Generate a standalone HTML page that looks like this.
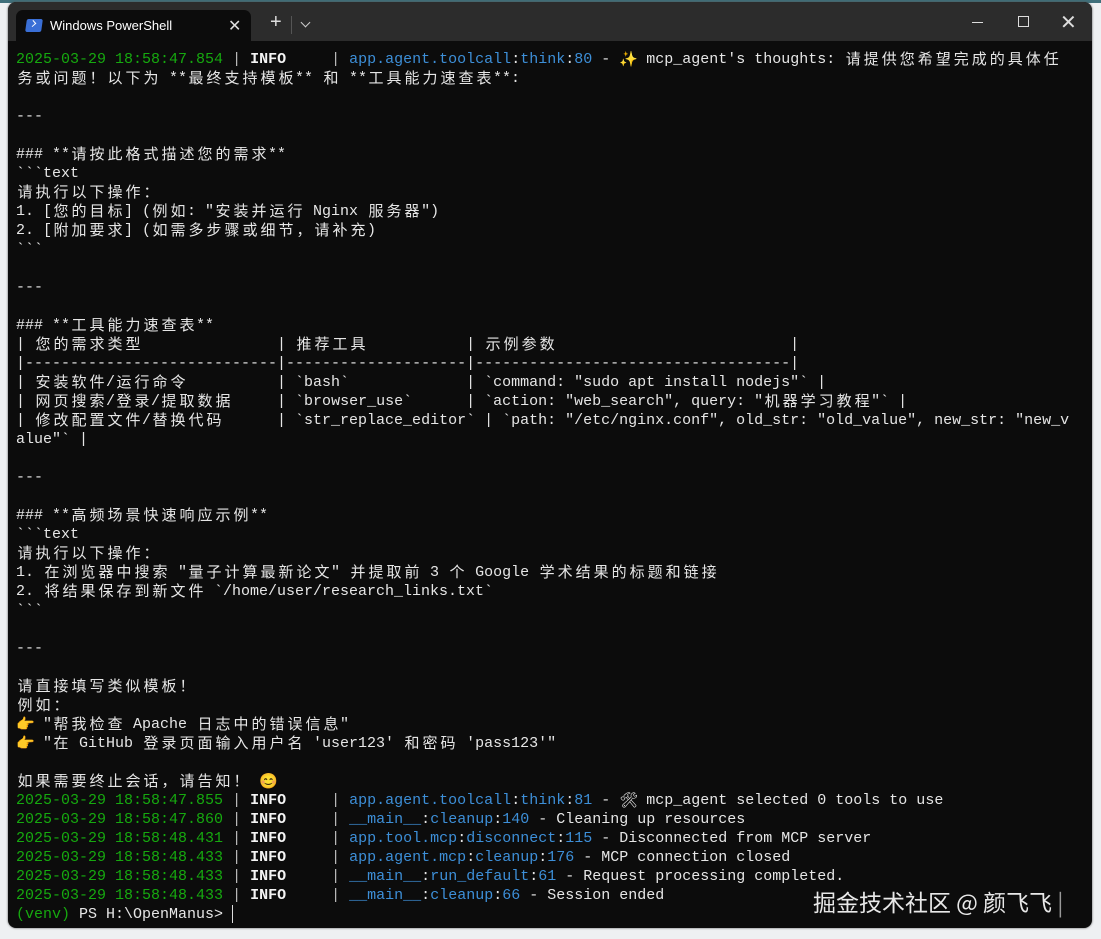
<!DOCTYPE html>
<html><head><meta charset="utf-8">
<style>
html,body{margin:0;padding:0;width:1101px;height:939px;overflow:hidden;background:#eef0f2;}
#top{position:absolute;left:0;top:0;width:1101px;height:3px;background:#3f6f7a;}
#win{position:absolute;left:8px;top:2px;width:1084px;height:926px;background:#0c0c0c;border-radius:8px;overflow:hidden;box-shadow:0 0 2px #555;}
#bar{position:absolute;left:0;top:0;width:1084px;height:39px;background:#2c2c2c;}
#tab{position:absolute;left:8px;top:8px;width:235px;height:32px;background:#0c0c0c;border-radius:7px 7px 0 0;}
#tab .t{position:absolute;left:34px;top:8px;font:13px "Liberation Sans",sans-serif;color:#fff;}
#tab .x{position:absolute;left:212px;top:6px;font:16px "Liberation Sans",sans-serif;color:#ddd;}
.icon{position:absolute;left:10px;top:9px;width:16px;height:13px;background:#3a6fd6;border-radius:2px;transform:skewX(-8deg);}
.icon:after{content:"";position:absolute;left:4px;top:2px;width:4px;height:4px;border-right:1.5px solid #fff;border-bottom:1.5px solid #fff;transform:rotate(-45deg);}
.plus{position:absolute;left:262px;top:9px;font:20px "Liberation Sans",sans-serif;color:#ddd;}
.sep{position:absolute;left:283px;top:14px;width:1px;height:18px;background:#555;}
.dn{position:absolute;left:294px;top:17px;width:6px;height:6px;border-right:1.3px solid #ccc;border-bottom:1.3px solid #ccc;transform:rotate(45deg);}
.min{position:absolute;left:964px;top:20px;width:11px;height:1px;background:#ddd;}
.max{position:absolute;left:1010px;top:14px;width:9px;height:9px;border:1px solid #ddd;}
.cls{position:absolute;left:1052px;top:8px;font:20px "Liberation Sans",sans-serif;color:#ddd;}
pre{position:absolute;left:8px;top:48px;margin:0;font:15px/19px "Liberation Mono",monospace;color:#e6e6e6;white-space:pre;}
.g{color:#16a90f}.w{color:#f4f4f4;font-weight:bold}.b{color:#3d8fd8}.d{color:#bbb}
.c{display:inline-block;width:18px;height:19px;line-height:17px;vertical-align:top;overflow:hidden;text-align:center;font-family:"Noto Sans CJK SC","WenQuanYi Zen Hei",sans-serif;}
.cur{display:inline-block;width:1px;height:18px;background:#ddd;vertical-align:top}
#wm{position:absolute;left:805px;top:882px;font:23px "Noto Sans CJK SC","WenQuanYi Zen Hei",sans-serif;color:#e8e8e8;white-space:nowrap;}
</style></head><body>
<div id="top"></div>
<div id="win">
<div id="bar"><div id="tab"><div class="icon"></div><div class="t">Windows PowerShell</div><div class="x">✕</div></div>
<div class="plus">+</div><div class="sep"></div><div class="dn"></div>
<div class="min"></div><div class="max"></div><div class="cls">✕</div></div>
<pre id="p"><span class="g">2025-03-29 18:58:47.854</span> <span class="d">|</span> <span class="w">INFO</span>     <span class="d">|</span> <span class="b">app.agent.toolcall</span>:<span class="b">think</span>:<span class="b">80</span> - ✨ mcp_agent's thoughts: 请提供您希望完成的具体任
务或问题！以下为 **最终支持模板** 和 **工具能力速查表**:

---

### **请按此格式描述您的需求**
&#96;&#96;&#96;text
请执行以下操作：
1. [您的目标] (例如: "安装并运行 Nginx 服务器")
2. [附加要求] (如需多步骤或细节，请补充)
&#96;&#96;&#96;

---

### **工具能力速查表**
| 您的需求类型               | 推荐工具           | 示例参数                          |
|----------------------------|--------------------|-----------------------------------|
| 安装软件/运行命令          | &#96;bash&#96;             | &#96;command: "sudo apt install nodejs"&#96; |
| 网页搜索/登录/提取数据     | &#96;browser_use&#96;      | &#96;action: "web_search", query: "机器学习教程"&#96; |
| 修改配置文件/替换代码      | &#96;str_replace_editor&#96; | &#96;path: "/etc/nginx.conf", old_str: "old_value", new_str: "new_v
alue"&#96; |

---

### **高频场景快速响应示例**
&#96;&#96;&#96;text
请执行以下操作：
1. 在浏览器中搜索 "量子计算最新论文" 并提取前 3 个 Google 学术结果的标题和链接
2. 将结果保存到新文件 &#96;/home/user/research_links.txt&#96;
&#96;&#96;&#96;

---

请直接填写类似模板！
例如：
👉 "帮我检查 Apache 日志中的错误信息"
👉 "在 GitHub 登录页面输入用户名 'user123' 和密码 'pass123'"

如果需要终止会话，请告知！ 😊
<span class="g">2025-03-29 18:58:47.855</span> <span class="d">|</span> <span class="w">INFO</span>     <span class="d">|</span> <span class="b">app.agent.toolcall</span>:<span class="b">think</span>:<span class="b">81</span> - 🛠 mcp_agent selected 0 tools to use
<span class="g">2025-03-29 18:58:47.860</span> <span class="d">|</span> <span class="w">INFO</span>     <span class="d">|</span> <span class="b">__main__</span>:<span class="b">cleanup</span>:<span class="b">140</span> - Cleaning up resources
<span class="g">2025-03-29 18:58:48.431</span> <span class="d">|</span> <span class="w">INFO</span>     <span class="d">|</span> <span class="b">app.tool.mcp</span>:<span class="b">disconnect</span>:<span class="b">115</span> - Disconnected from MCP server
<span class="g">2025-03-29 18:58:48.433</span> <span class="d">|</span> <span class="w">INFO</span>     <span class="d">|</span> <span class="b">app.agent.mcp</span>:<span class="b">cleanup</span>:<span class="b">176</span> - MCP connection closed
<span class="g">2025-03-29 18:58:48.433</span> <span class="d">|</span> <span class="w">INFO</span>     <span class="d">|</span> <span class="b">__main__</span>:<span class="b">run_default</span>:<span class="b">61</span> - Request processing completed.
<span class="g">2025-03-29 18:58:48.433</span> <span class="d">|</span> <span class="w">INFO</span>     <span class="d">|</span> <span class="b">__main__</span>:<span class="b">cleanup</span>:<span class="b">66</span> - Session ended
<span class="g">(venv)</span> PS H:\OpenManus&gt; <span class="cur"></span></pre>
<div id="wm">掘金技术社区 @ 颜飞飞 <span style="color:#999">|</span></div>
</div>
<script>
(function(){
var re=/[\u2E80-\u9FFF\uF900-\uFAFF\uFF00-\uFFEF\u3000-\u303F\u2728]|\uD83D[\uDC00-\uDFFF]/g;
var pre=document.getElementById('p');
var w=document.createTreeWalker(pre,NodeFilter.SHOW_TEXT,null,false),nodes=[],n;
while(n=w.nextNode())nodes.push(n);
nodes.forEach(function(t){
 var s=t.nodeValue;re.lastIndex=0;if(!re.test(s))return;re.lastIndex=0;
 var f=document.createDocumentFragment(),last=0,m;
 while(m=re.exec(s)){
  if(m.index>last)f.appendChild(document.createTextNode(s.slice(last,m.index)));
  var sp=document.createElement('span');sp.className='c';sp.textContent=m[0];f.appendChild(sp);
  last=m.index+m[0].length;
 }
 if(last<s.length)f.appendChild(document.createTextNode(s.slice(last)));
 t.parentNode.replaceChild(f,t);
});
})();
</script>
</body></html>
